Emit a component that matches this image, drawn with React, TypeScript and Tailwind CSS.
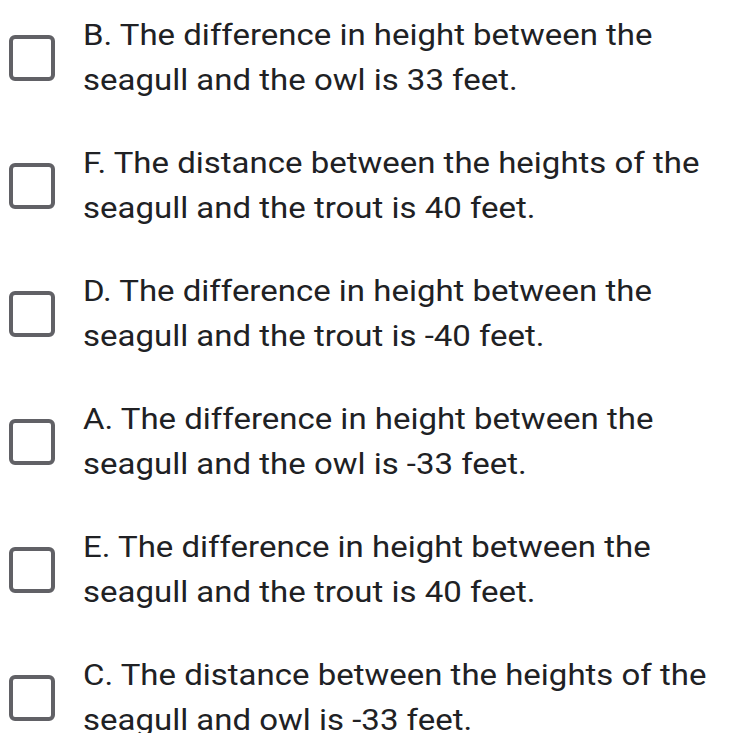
const options = [
  ["B. The difference in height between the", "seagull and the owl is 33 feet."],
  ["F. The distance between the heights of the", "seagull and the trout is 40 feet."],
  ["D. The difference in height between the", "seagull and the trout is -40 feet."],
  ["A. The difference in height between the", "seagull and the owl is -33 feet."],
  ["E. The difference in height between the", "seagull and the trout is 40 feet."],
  ["C. The distance between the heights of the", "seagull and owl is -33 feet."],
];

const App = () => {
  return (
    <div className="h-[733px] w-[733px] overflow-hidden bg-white pt-[13px] font-['Roboto',sans-serif] text-[#202124]">
      <div className="flex flex-col gap-[38px]">
        {options.map(([first, second]) => (
          <div key={first} className="flex items-center">
            <div className="ml-[9px] h-[46px] w-[46px] shrink-0 rounded-[6px] border-[4px] border-[#616166]" />
            {/* the source shot is stretched sideways, so widen the glyphs to match */}
            <div className="ml-[28px] origin-left scale-x-[1.137] whitespace-nowrap text-[29px] leading-[45px]">
              <div>{first}</div>
              <div>{second}</div>
            </div>
          </div>
        ))}
      </div>
    </div>
  );
};

export default App;
